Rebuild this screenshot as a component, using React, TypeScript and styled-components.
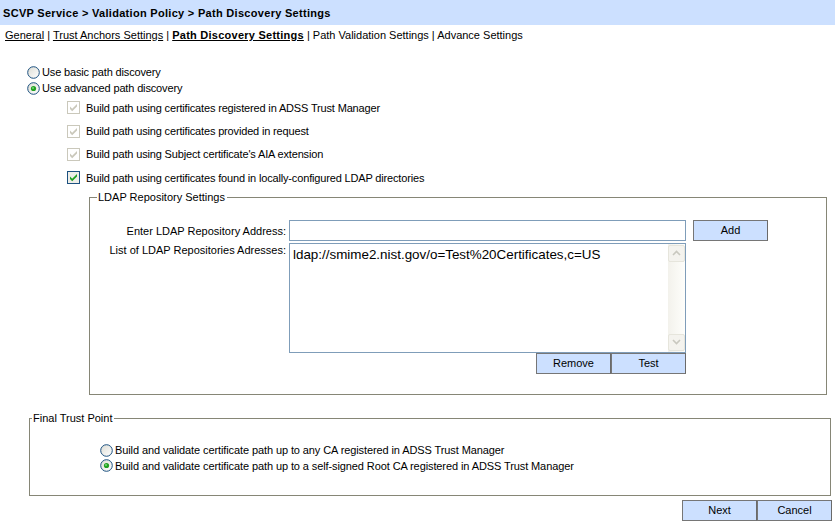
import styled, { createGlobalStyle } from "styled-components";

const GlobalStyle = createGlobalStyle`
  html, body {
    margin: 0;
    padding: 0;
    background: #ffffff;
  }
  body {
    font-family: Tahoma, "Liberation Sans", Arial, sans-serif;
    font-size: 11px;
    color: #000000;
  }
`;

function Radio({ checked }: { checked?: boolean }) {
  const id = checked ? "rg-on" : "rg-off";
  return (
    <svg width="13" height="13" viewBox="0 0 13 13">
      <defs>
        <linearGradient id={id} x1="0" y1="0" x2="1" y2="1">
          <stop offset="0" stopColor="#dcdcd4" />
          <stop offset="1" stopColor="#ffffff" />
        </linearGradient>
      </defs>
      <circle cx="6.5" cy="6.5" r="5.8" fill={`url(#${id})`} stroke="#1c5180" strokeWidth="1" />
      {checked && (
        <>
          <circle cx="6.5" cy="6.5" r="2.6" fill="#21a121" />
          <circle cx="6" cy="6" r="1" fill="#79d879" />
        </>
      )}
    </svg>
  );
}

function Check({ disabled }: { disabled?: boolean }) {
  const edge = disabled ? "#cac8bb" : "#1c5180";
  const tick = disabled ? "#cac8bb" : "#21a121";
  return (
    <svg width="13" height="13" viewBox="0 0 13 13">
      <rect x="0.5" y="0.5" width="12" height="12" fill={disabled ? "#ffffff" : "#eeeee8"} stroke={edge} />
      <path d="M3 5.6 L5.2 7.8 L10 3 L10 5.4 L5.2 10.2 L3 8 Z" fill={tick} />
    </svg>
  );
}

export default function App() {
  return (
    <Page>
      <GlobalStyle />
      <TitleBar>SCVP Service &gt; Validation Policy &gt; Path Discovery Settings</TitleBar>
      <Tabs>
        <TabLink>General</TabLink> | <TabLink>Trust Anchors Settings</TabLink> |{" "}
        <TabLink $active>Path Discovery Settings</TabLink> | Path Validation Settings | Advance Settings
      </Tabs>

      <Modes>
        <RadioRow>
          <Radio />
          <span>Use basic path discovery</span>
        </RadioRow>
        <RadioRow>
          <Radio checked />
          <span>Use advanced path discovery</span>
        </RadioRow>
      </Modes>

      <Sources>
        <CheckRow>
          <Check disabled />
          <span>Build path using certificates registered in ADSS Trust Manager</span>
        </CheckRow>
        <CheckRow>
          <Check disabled />
          <span>Build path using certificates provided in request</span>
        </CheckRow>
        <CheckRow>
          <Check disabled />
          <span>Build path using Subject certificate's AIA extension</span>
        </CheckRow>
        <CheckRow>
          <Check />
          <span>Build path using certificates found in locally-configured LDAP directories</span>
        </CheckRow>
      </Sources>

      <LdapGroup>
        <Legend $indent={7}>LDAP Repository Settings</Legend>
        <LdapGrid>
          <FieldLabel $offset={4}>Enter LDAP Repository Address:</FieldLabel>
          <TextBox />
          <Button>Add</Button>
          <FieldLabel $offset={0}>List of LDAP Repositories Adresses:</FieldLabel>
          <ListColumn>
            <ListBox>
              <ListItems>ldap://smime2.nist.gov/o=Test%20Certificates,c=US</ListItems>
              <ScrollBar>
                <ScrollArrow>
                  <svg width="9" height="6" viewBox="0 0 9 6">
                    <path d="M1 5 L4.5 1.5 L8 5" fill="none" stroke="#c9c8bf" strokeWidth="1.6" />
                  </svg>
                </ScrollArrow>
                <ScrollArrow>
                  <svg width="9" height="6" viewBox="0 0 9 6">
                    <path d="M1 1 L4.5 4.5 L8 1" fill="none" stroke="#c9c8bf" strokeWidth="1.6" />
                  </svg>
                </ScrollArrow>
              </ScrollBar>
            </ListBox>
            <ListButtons>
              <Button>Remove</Button>
              <Button>Test</Button>
            </ListButtons>
          </ListColumn>
        </LdapGrid>
      </LdapGroup>

      <TrustGroup>
        <Legend $indent={2}>Final Trust Point</Legend>
        <TrustOptions>
          <RadioRow $tight>
            <Radio />
            <span>Build and validate certificate path up to any CA registered in ADSS Trust Manager</span>
          </RadioRow>
          <RadioRow $tight>
            <Radio checked />
            <span>Build and validate certificate path up to a self-signed Root CA registered in ADSS Trust Manager</span>
          </RadioRow>
        </TrustOptions>
      </TrustGroup>

      <Footer>
        <Button>Next</Button>
        <Button>Cancel</Button>
      </Footer>
    </Page>
  );
}

const Page = styled.div`
  width: 835px;
  height: 526px;
  overflow: hidden;
`;

const TitleBar = styled.div`
  height: 25px;
  line-height: 26px;
  padding-left: 3px;
  background: #cce0ff;
  font-weight: bold;
  font-size: 11px;
  letter-spacing: 0.3px;
`;

const Tabs = styled.div`
  padding: 3px 0 0 5px;
  height: 15px;
  line-height: 15px;
`;

const TabLink = styled.span<{ $active?: boolean }>`
  text-decoration: underline;
  font-weight: ${(p) => (p.$active ? "bold" : "normal")};
  letter-spacing: ${(p) => (p.$active ? "0.25px" : "0")};
`;

const Modes = styled.div`
  margin: 21px 0 0 27px;
  display: flex;
  flex-direction: column;
`;

const RadioRow = styled.label<{ $tight?: boolean }>`
  display: flex;
  align-items: center;
  gap: 2px;
  height: ${(p) => (p.$tight ? "15.5px" : "16px")};
  letter-spacing: ${(p) => (p.$tight ? "-0.1px" : "-0.15px")};
`;

const Sources = styled.div`
  margin: 0 0 0 67px;
  display: flex;
  flex-direction: column;
`;

const CheckRow = styled.label`
  display: flex;
  align-items: center;
  gap: 6px;
  height: 23.4px;
  letter-spacing: -0.16px;
`;

const Group = styled.fieldset`
  margin: 0;
  padding: 0;
  border: 1px solid #868676;
  box-sizing: border-box;
`;

const Legend = styled.legend<{ $indent: number }>`
  padding: 0 2px 0 1px;
  margin-left: ${(p) => p.$indent}px;
  line-height: 13px;
`;

const LdapGroup = styled(Group)`
  margin: 1px 0 0 89px;
  width: 738px;
  height: 204px;
`;

const LdapGrid = styled.div`
  display: grid;
  grid-template-columns: 196px 397px 75px;
  column-gap: 3px;
  row-gap: 2px;
  margin-top: 16px;
  align-items: start;

  & > :nth-child(3) {
    margin-left: 4px;
  }
`;

const FieldLabel = styled.div<{ $offset: number }>`
  text-align: right;
  line-height: 14px;
  padding-top: ${(p) => p.$offset}px;
`;

const TextBox = styled.div`
  height: 21px;
  border: 1px solid #7f9db9;
  box-sizing: border-box;
  background: #ffffff;
`;

const ListColumn = styled.div`
  display: flex;
  flex-direction: column;
  align-items: flex-end;
`;

const ListBox = styled.div`
  width: 397px;
  height: 110px;
  box-sizing: border-box;
  border: 1px solid #7f9db9;
  display: flex;
`;

const ListItems = styled.div`
  flex: 1;
  padding: 3px 0 0 3px;
  font-family: "Liberation Sans", Arial, sans-serif;
  font-size: 13.4px;
  line-height: 16px;
`;

const ScrollBar = styled.div`
  width: 17px;
  background: linear-gradient(to right, #f3f2ec, #fefefb);
  display: flex;
  flex-direction: column;
  justify-content: space-between;
  padding: 1px 0;
`;

const ScrollArrow = styled.div`
  height: 17px;
  box-sizing: border-box;
  border: 1px solid #e6e5dc;
  border-radius: 2px;
  background: #f4f3ee;
  display: flex;
  align-items: center;
  justify-content: center;
`;

const ListButtons = styled.div`
  display: flex;
`;

const Button = styled.button`
  width: 75px;
  height: 21px;
  padding: 0;
  background: #cce0ff;
  border: 1px solid #767676;
  border-right-color: #6a6a6a;
  font-family: inherit;
  font-size: 11px;
  color: #000000;
`;

const TrustGroup = styled(Group)`
  margin: 17px 0 0 29px;
  width: 802px;
  height: 84px;
`;

const TrustOptions = styled.div`
  margin: 18px 0 0 70px;
  display: flex;
  flex-direction: column;
`;

const Footer = styled.div`
  display: flex;
  justify-content: flex-end;
  padding: 4px 3px 0 0;
`;
